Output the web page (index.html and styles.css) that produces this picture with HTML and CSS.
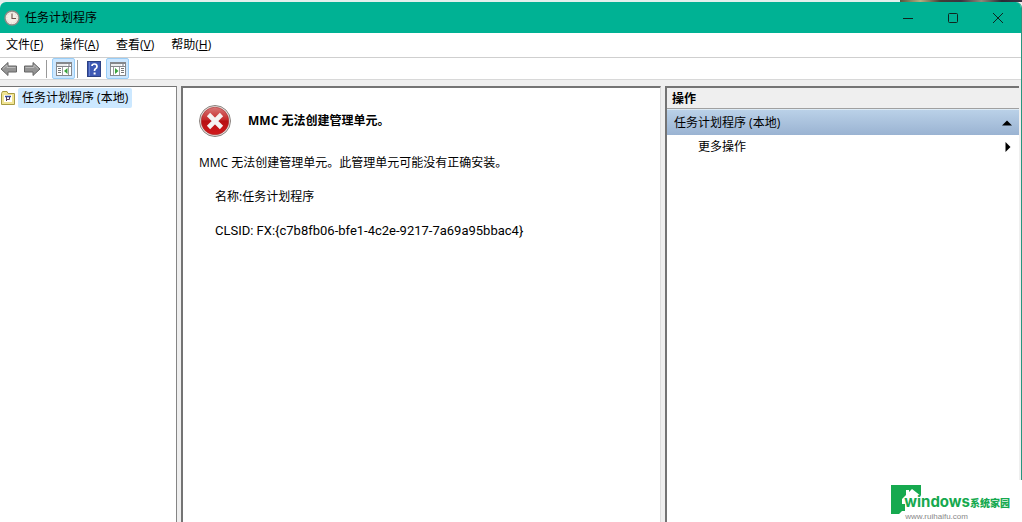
FILE: index.html
```html
<!DOCTYPE html>
<html lang="zh-CN">
<head>
<meta charset="utf-8">
<title>任务计划程序</title>
<link rel="stylesheet" href="styles.css">
</head>
<body>
<div class="desktop"><div class="wallpaper"></div></div>
<div class="window">
  <header class="titlebar">
    <svg class="clock" viewBox="0 0 16 16" width="16" height="16" aria-hidden="true">
      <circle cx="8" cy="8" r="7" fill="#f4eee6" stroke="#8f8a86" stroke-width="1.4"/>
      <circle cx="8" cy="8" r="5.2" fill="none" stroke="#c9c5be" stroke-width=".8" stroke-dasharray="1 1.7"/>
      <path d="M8 3.5V8.5H12" fill="none" stroke="#6d5047" stroke-width="1.1"/>
    </svg>
    <h1 class="title">任务计划程序</h1>
    <div class="controls">
      <button class="control" aria-label="最小化"><svg viewBox="0 0 12 12" width="12" height="12"><path d="M1 6.5H11"/></svg></button>
      <button class="control" aria-label="最大化"><svg viewBox="0 0 12 12" width="12" height="12"><rect x="1.5" y="1.5" width="9" height="9" rx="1"/></svg></button>
      <button class="control" aria-label="关闭"><svg viewBox="0 0 12 12" width="12" height="12"><path d="M1 1L11 11M11 1L1 11"/></svg></button>
    </div>
  </header>
  <nav class="menubar">
    <button class="menu">文件(<u>F</u>)</button>
    <button class="menu">操作(<u>A</u>)</button>
    <button class="menu">查看(<u>V</u>)</button>
    <button class="menu">帮助(<u>H</u>)</button>
  </nav>
  <div class="toolbar">
    <button class="arrow" aria-label="后退">
      <svg viewBox="0 0 18 14" width="18" height="14"><path d="M1 7L8 .5V4H16.5V10H8V13.5Z" fill="#949494" stroke="#666" /><path d="M3 6.5L7 3V5.5H15.5" fill="none" stroke="#bbb"/></svg>
    </button>
    <button class="arrow" aria-label="前进">
      <svg viewBox="0 0 18 14" width="18" height="14"><path d="M17 7L10 .5V4H1.5V10H10V13.5Z" fill="#949494" stroke="#666"/><path d="M2.5 5.5H11V3L15 6.5" fill="none" stroke="#bbb"/></svg>
    </button>
    <span class="divider"></span>
    <button class="tool pressed" aria-label="显示/隐藏控制台树">
      <svg viewBox="0 0 16 14" width="16" height="14"><rect x=".5" y=".5" width="15" height="13" fill="#fff" stroke="#85888c"/><path d="M1 1.5H15M1 4.5H15" stroke="#85888c"/><path d="M1 3H11" stroke="#d8dadd"/><path d="M12 3H14" stroke="#778"/><path d="M6.5 5V13M12.5 5V13" stroke="#9a9da0"/><path d="M2 6.5H5M2 8.5H5M2 10.5H5" stroke="#777"/><path d="M11.5 6V12L8 9Z" fill="#39a43c"/></svg>
    </button>
    <span class="divider"></span>
    <button class="tool" aria-label="帮助">
      <svg viewBox="0 0 14 16" width="14" height="16"><rect x=".5" y=".5" width="13" height="15" fill="#3d58b4" stroke="#2c4183"/><path d="M2.5 1V15" stroke="#6680cc"/><path d="M5 5Q5 3 7.5 3T10 5.5Q10 7 8.5 7.8Q7.5 8.5 7.5 10" fill="none" stroke="#fff" stroke-width="1.7"/><rect x="6.6" y="11.5" width="2" height="2" fill="#fff"/></svg>
    </button>
    <button class="tool pressed" aria-label="显示/隐藏操作窗格">
      <svg viewBox="0 0 16 14" width="16" height="14"><rect x=".5" y=".5" width="15" height="13" fill="#fff" stroke="#85888c"/><path d="M1 1.5H15M1 4.5H15" stroke="#85888c"/><path d="M1 3H11" stroke="#d8dadd"/><path d="M12 3H14" stroke="#778"/><path d="M3.5 5V13M9.5 5V13" stroke="#9a9da0"/><path d="M11 6.5H14M11 8.5H14M11 10.5H14" stroke="#777"/><path d="M5 6V12L8.5 9Z" fill="#39a43c"/></svg>
    </button>
  </div>
  <main class="panes">
    <aside class="tree">
      <div class="node">
        <svg viewBox="0 0 16 16" width="16" height="16" aria-hidden="true"><path d="M1.5 3.5L2.5 1.5H7L8 3.5H14.5V14.5H1.5Z" fill="#f1e493" stroke="#a69b42"/><rect x="4" y="5" width="8" height="7" fill="#fff"/><path d="M5 6.5H11" stroke="#344b9b" stroke-width="1.5"/><path d="M6.5 7V11M9.5 7V9.5H7" fill="none" stroke="#563a55"/></svg>
        <span class="node-name">任务计划程序 (本地)</span>
      </div>
    </aside>
    <section class="content">
      <div class="error">
        <svg viewBox="1 1 32 32" width="32" height="32" aria-hidden="true">
          <defs><linearGradient id="red" x2="0" y2="1"><stop stop-color="#d97878"/><stop offset=".45" stop-color="#c52a2b"/><stop offset=".5" stop-color="#b70f13"/><stop offset="1" stop-color="#d21a1c"/></linearGradient></defs>
          <circle cx="17" cy="17" r="15.5" fill="#ece7e4" stroke="#89807d"/>
          <circle cx="17" cy="17" r="13.8" fill="url(#red)" stroke="#a32c2c" stroke-width=".6"/>
          <path d="M10.5 10.5L23.5 23.5M23.5 10.5L10.5 23.5" stroke="#f5f3f3" stroke-width="4.6"/>
        </svg>
        <h2 class="error-title">MMC 无法创建管理单元。</h2>
      </div>
      <p class="text">MMC 无法创建管理单元。此管理单元可能没有正确安装。</p>
      <p class="text detail">名称:任务计划程序</p>
      <p class="text detail clsid">CLSID: FX:{c7b8fb06-bfe1-4c2e-9217-7a69a95bbac4}</p>
    </section>
    <aside class="actions">
      <h2 class="actions-title">操作</h2>
      <button class="group"><span>任务计划程序 (本地)</span><svg viewBox="0 0 10 6" width="10" height="6"><path d="M0 5.5L5 .5L10 5.5Z"/></svg></button>
      <button class="more"><span>更多操作</span><svg viewBox="0 0 6 10" width="6" height="10"><path d="M.5 0L5.5 5L.5 10Z"/></svg></button>
    </aside>
  </main>
</div>
<div class="watermark">
  <svg viewBox="0 0 32 30" width="32" height="30" aria-hidden="true"><path d="M0 0H30V11L21 4L18 7V5H15V10L11 14V19H14V26H11L8 29H0Z" fill="#16a94f"/></svg>
  <div class="brand"><span class="brand-name">windows<b>系统家园</b></span><span class="brand-url">www.ruihaifu.com</span></div>
</div>
</body>
</html>
```
FILE: styles.css
```css
* { box-sizing: border-box; }
body {
  margin: 0;
  height: 100vh;
  display: flex;
  flex-direction: column;
  overflow: hidden;
  background: #efefef;
  color: #000;
  font-family: "Open Sans", "Noto Sans CJK SC", sans-serif;
  font-size: 12px;
  line-height: 18px;
}
h1, h2, p { margin: 0; font-size: 12px; }
button {
  margin: 0;
  padding: 0;
  border: 0;
  background: none;
  color: inherit;
  font: inherit;
}
svg { display: block; flex: none; }
.desktop { display: flex; justify-content: flex-end; height: 2px; background: #e3efed; }
.wallpaper { width: 122px; background: linear-gradient(90deg, #55533c, #b5ae80, #433d35, #3b3340, #8f8878, #292b35, #3c3344); }
.window {
  flex: 1;
  min-height: 0;
  display: flex;
  flex-direction: column;
  border-right: 1px solid #27967f;
  border-radius: 6px 6px 0 0;
  overflow: hidden;
  background: #fff;
}
.titlebar {
  display: flex;
  align-items: center;
  gap: 5px;
  height: 31px;
  padding-left: 4px;
  background: #00b294;
}
.title { flex: 1; font-weight: 400; }
.controls { display: flex; padding-right: 1px; }
.control { display: grid; place-items: center; width: 45px; height: 30px; }
.control svg { fill: none; stroke: #10251f; }
.menubar { display: flex; gap: 17px; height: 24px; padding-left: 6px; }
.toolbar {
  display: flex;
  align-items: center;
  height: 23px;
  border-top: 1px solid #cfcfcf;
  border-bottom: 1px solid #d8d8d8;
}
.arrow { width: 23px; }
.divider { width: 1px; height: 18px; margin: 0 5px 0 0; background: #999; }
.tool { display: grid; place-items: center; width: 21px; height: 21px; margin-right: 2px; }
.pressed { width: 23px; border: 1px solid #99cdf6; border-radius: 2px; background: #cce7ff; }
.panes {
  flex: 1;
  min-height: 0;
  display: grid;
  grid-template-columns: 177px minmax(0, 1fr) 354px;
  column-gap: 4px;
  padding: 6px 2px 0 0;
  background: #efefef;
}
.tree, .content, .actions { background: #fff; border-top: 2px solid #747474; }
.tree { border-top-width: 1px; border-right: 1px solid #858585; }
.content { border-left: 2px solid #747474; border-right: 1px solid #ddd; padding: 17px 16px; }
.actions { border-left: 2px solid #747474; }
.node { display: flex; align-items: center; gap: 2px; height: 22px; }
.node-name { padding: 1px 4px; border-radius: 2px; background: #cce8ff; }
.error { display: flex; align-items: center; gap: 17px; margin-bottom: 17px; }
.error-title { font-weight: 700; }
.text { margin-bottom: 16px; }
.detail { margin-left: 16px; }
.clsid { font-family: Roboto, sans-serif; font-size: 13px; }
.actions-title { height: 21px; padding-left: 5px; border-bottom: 1px solid #a0a0a0; background: #efefef; line-height: 22px; }
.group, .more { display: flex; align-items: center; justify-content: space-between; width: 100%; }
.group { height: 26px; padding: 0 7px; border-top: 1px solid #dceaf5; background: linear-gradient(#bad1e8, #9ab3d2); }
.more { height: 23px; padding: 0 8px 0 31px; }
.watermark {
  position: fixed;
  right: 0;
  bottom: 0;
  display: flex;
  padding: 5px 12px 5px 0;
  background: #fff;
  color: #16a94f;
}
.brand { display: flex; flex-direction: column; margin: 8px 0 -4px -19px; }
.brand-name { font: 700 15px/18px Inter, "Noto Sans CJK SC", sans-serif; white-space: nowrap; }
.brand-name b { font-size: 10px; }
.brand-url { margin-left: 1px; color: #888; font: 8px/9px "Liberation Sans", sans-serif; }
```
